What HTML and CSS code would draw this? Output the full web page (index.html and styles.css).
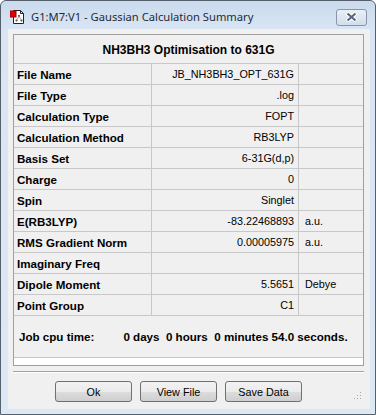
FILE: index.html
```html
<!DOCTYPE html>
<html lang="en">

<head>
    <meta charset="UTF-8">
    <title>Gaussian Calculation Summary</title>
    <link rel="stylesheet" href="styles.css">
</head>

<body>
    <div class="window">
        <div class="titlebar">
            <svg class="app-icon" width="15" height="15" viewBox="0 0 15 15">
                <path d="M3.5 1.5 H10.5 L13.5 4.5 V14.5 H3.5 Z" fill="#fff" stroke="#222" />
                <path d="M10.5 1.5 V4.5 H13.5" fill="none" stroke="#222" />
                <rect x="0" y="2" width="6" height="6" fill="#e00000" stroke="#900" />
                <circle cx="9" cy="7" r="1" fill="#333" />
                <circle cx="6.5" cy="11.5" r="1" fill="#333" />
                <circle cx="11.5" cy="11.5" r="1" fill="#333" />
                <path d="M9 7 L6.5 11.5 M9 7 L11.5 11.5" stroke="#888" stroke-width="0.8" />
            </svg>
            <span class="title">G1:M7:V1 - Gaussian Calculation Summary</span>
            <div class="close-btn">
                <svg width="13" height="10" viewBox="0 0 13 10">
                    <path d="M2 1 L11 9 M11 1 L2 9" stroke="#fff" stroke-width="4" />
                    <path d="M2.5 1.5 L10.5 8.5 M10.5 1.5 L2.5 8.5" stroke="#56637a" stroke-width="2" />
                </svg>
            </div>
        </div>

        <div class="client">
            <div class="summary">
                <div class="head-row">NH3BH3 Optimisation to 631G</div>

                <div class="row"><div class="label">File Name</div><div class="value">JB_NH3BH3_OPT_631G</div><div class="unit"></div></div>
                <div class="row"><div class="label">File Type</div><div class="value">.log</div><div class="unit"></div></div>
                <div class="row"><div class="label">Calculation Type</div><div class="value">FOPT</div><div class="unit"></div></div>
                <div class="row"><div class="label">Calculation Method</div><div class="value">RB3LYP</div><div class="unit"></div></div>
                <div class="row"><div class="label">Basis Set</div><div class="value">6-31G(d,p)</div><div class="unit"></div></div>
                <div class="row"><div class="label">Charge</div><div class="value">0</div><div class="unit"></div></div>
                <div class="row"><div class="label">Spin</div><div class="value">Singlet</div><div class="unit"></div></div>
                <div class="row"><div class="label">E(RB3LYP)</div><div class="value">-83.22468893</div><div class="unit">a.u.</div></div>
                <div class="row"><div class="label">RMS Gradient Norm</div><div class="value">0.00005975</div><div class="unit">a.u.</div></div>
                <div class="row"><div class="label">Imaginary Freq</div><div class="value"></div><div class="unit"></div></div>
                <div class="row"><div class="label">Dipole Moment</div><div class="value">5.5651</div><div class="unit">Debye</div></div>
                <div class="row"><div class="label">Point Group</div><div class="value">C1</div><div class="unit"></div></div>

                <div class="cpu-row">
                    <span class="cpu-label">Job cpu time:</span>
                    <span class="cpu-value">0 days  0 hours  0 minutes 54.0 seconds.</span>
                </div>
                <div class="filler"></div>
            </div>

            <div class="separator"></div>

            <div class="buttons">
                <button>Ok</button>
                <button>View File</button>
                <button>Save Data</button>
            </div>

            <svg class="grip" width="9" height="9" viewBox="0 0 9 9">
                <rect x="7" y="1" width="1" height="1" fill="#a8a8a8" />
                <rect x="4" y="4" width="1" height="1" fill="#a8a8a8" />
                <rect x="7" y="4" width="1" height="1" fill="#a8a8a8" />
                <rect x="1" y="7" width="1" height="1" fill="#a8a8a8" />
                <rect x="4" y="7" width="1" height="1" fill="#a8a8a8" />
                <rect x="7" y="7" width="1" height="1" fill="#a8a8a8" />
            </svg>
        </div>
    </div>
</body>

</html>
```

FILE: styles.css
```css
body {
    margin: 0;
    background-color: #ffffff;
    font-family: 'Liberation Sans', Arial, sans-serif;
    color: #000000;
}

.window {
    width: 376px;
    height: 415px;
    box-sizing: border-box;
    border: 1px solid #56606c;
    border-radius: 6px 6px 0 0;
    background: linear-gradient(#cadbee, #d9e5f3 30px, #dde8f5);
    display: flex;
    flex-direction: column;
}

.titlebar {
    height: 28px;
    display: flex;
    align-items: center;
    padding-left: 9px;
    padding-right: 8px;
}

.app-icon {
    margin-top: 2px;
}

.title {
    margin-left: 6px;
    font-family: 'Noto Sans', 'Open Sans', sans-serif;
    font-size: 11.2px;
    color: #1e2a3a;
    flex: 1;
    margin-top: 2px;
}

.close-btn {
    width: 29px;
    height: 15px;
    border: 1px solid #8595ab;
    border-radius: 3px;
    background: linear-gradient(#e8eff7, #d3deeb);
    display: flex;
    align-items: center;
    justify-content: center;
    margin-top: 4px;
}

.client {
    flex: 1;
    margin: 0 5px 5px 7px;
    background-color: #f0f0f0;
    padding: 5px 6px 0 5px;
    position: relative;
}

.summary {
    border: 1px solid #a0a0a0;
    background-color: #ffffff;
}

.head-row {
    height: 29px;
    box-sizing: border-box;
    border-bottom: 1px solid #c8c8c8;
    background-color: #f0f0f0;
    display: flex;
    align-items: center;
    justify-content: center;
    font-weight: bold;
    font-size: 12px;
    padding-top: 2px;
}

.row {
    display: grid;
    grid-template-columns: 138px 147px 1fr;
    height: 21px;
    box-sizing: border-box;
    border-bottom: 1px solid #c8c8c8;
    background-color: #f0f0f0;
    font-size: 10.8px;
}

.label,
.value,
.unit {
    display: flex;
    align-items: center;
}

.label {
    border-right: 1px solid #c8c8c8;
    padding-left: 3px;
    font-weight: bold;
    font-size: 11.6px;
}

.value {
    border-right: 1px solid #c8c8c8;
    justify-content: flex-end;
    padding-right: 4px;
}

.unit {
    padding-left: 6px;
}

.cpu-row {
    height: 42px;
    box-sizing: border-box;
    border-bottom: 1px solid #c8c8c8;
    background-color: #f0f0f0;
    display: flex;
    align-items: center;
    font-weight: bold;
    font-size: 11.6px;
    padding-left: 5px;
}

.cpu-value {
    margin-left: 29px;
    white-space: pre;
}

.filler {
    height: 7px;
}

.separator {
    margin-top: 5px;
    border-top: 1px solid #a0a0a0;
    border-bottom: 1px solid #ffffff;
}

.buttons {
    display: flex;
    gap: 8px;
    margin-top: 8px;
    padding-left: 42px;
}

button {
    width: 77px;
    height: 21px;
    border: 1px solid #707070;
    border-radius: 3px;
    background: linear-gradient(#f2f2f2, #ebebeb 50%, #dddddd 51%, #cfcfcf);
    font-family: 'Liberation Sans', Arial, sans-serif;
    font-size: 10.8px;
    color: #000000;
    padding: 0;
}

.grip {
    position: absolute;
    right: 8px;
    bottom: 9px;
}
```
